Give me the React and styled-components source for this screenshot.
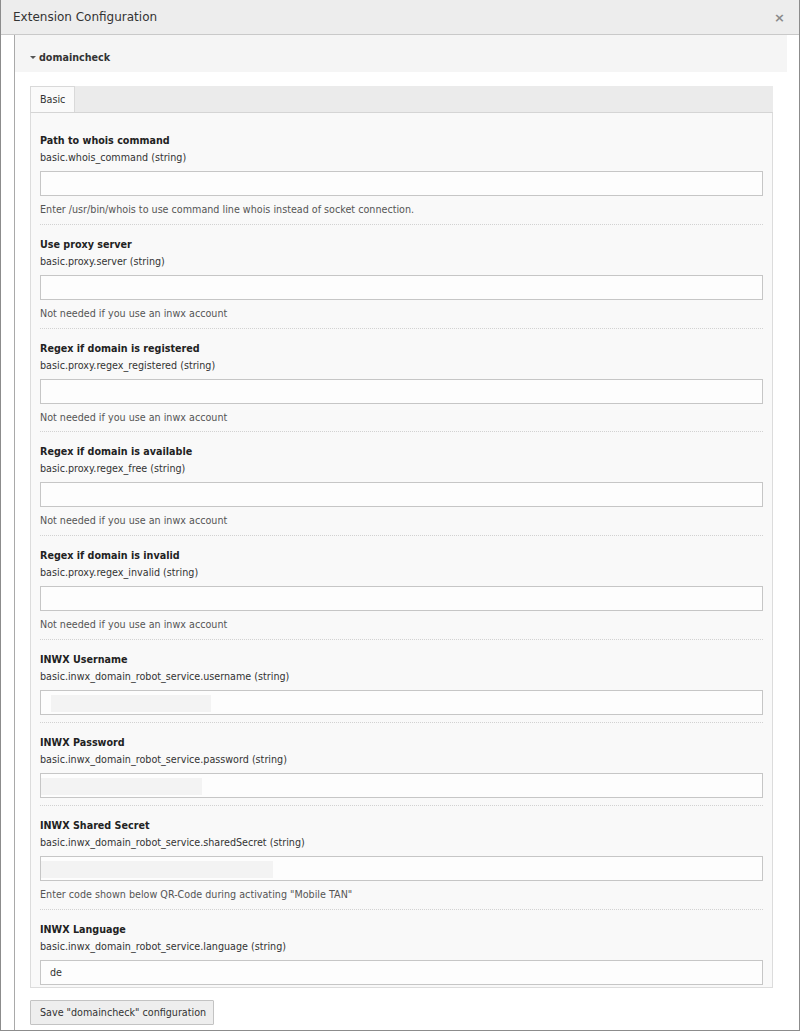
import styled, { createGlobalStyle } from 'styled-components';

const GlobalStyle = createGlobalStyle`
  * { box-sizing: border-box; }
  body {
    margin: 0;
    background: #fff;
    font-family: "DejaVu Sans", Verdana, sans-serif;
    color: #333;
  }
`;

const fields = [
  {
    title: 'Path to whois command',
    code: 'basic.whois_command (string)',
    help: 'Enter /usr/bin/whois to use command line whois instead of socket connection.',
  },
  {
    title: 'Use proxy server',
    code: 'basic.proxy.server (string)',
    help: 'Not needed if you use an inwx account',
  },
  {
    title: 'Regex if domain is registered',
    code: 'basic.proxy.regex_registered (string)',
    help: 'Not needed if you use an inwx account',
  },
  {
    title: 'Regex if domain is available',
    code: 'basic.proxy.regex_free (string)',
    help: 'Not needed if you use an inwx account',
  },
  {
    title: 'Regex if domain is invalid',
    code: 'basic.proxy.regex_invalid (string)',
    help: 'Not needed if you use an inwx account',
  },
  {
    title: 'INWX Username',
    code: 'basic.inwx_domain_robot_service.username (string)',
    mask: [10, 160],
  },
  {
    title: 'INWX Password',
    code: 'basic.inwx_domain_robot_service.password (string)',
    mask: [0, 161],
  },
  {
    title: 'INWX Shared Secret',
    code: 'basic.inwx_domain_robot_service.sharedSecret (string)',
    help: 'Enter code shown below QR-Code during activating "Mobile TAN"',
    mask: [0, 232],
  },
  {
    title: 'INWX Language',
    code: 'basic.inwx_domain_robot_service.language (string)',
    value: 'de',
  },
];

const Modal = styled.div`
  width: 800px;
  height: 1031px;
  border: 1px solid #8c8c8c;
  border-top: none;
  display: flex;
  flex-direction: column;
  overflow: hidden;
  background: #fff;
`;

const Header = styled.div`
  height: 35px;
  flex: none;
  display: flex;
  align-items: center;
  justify-content: space-between;
  padding: 0 14px 0 12px;
  background: #ededed;
  border-bottom: 1px solid #c9c9c9;
`;

const Title = styled.h1`
  margin: 0;
  font-size: 12px;
  font-weight: normal;
  color: #333;
`;

const Close = styled.span`
  font-size: 13px;
  font-weight: bold;
  color: #8a8a8a;
  line-height: 1;
`;

const Body = styled.div`
  flex: 1;
  padding-left: 13px;
  padding-right: 12px;
  display: flex;
  min-height: 0;
`;

const Scroller = styled.div`
  flex: 1;
  border-left: 1px solid #a9a9a9;
  overflow: hidden;
`;

const PanelHeading = styled.div`
  height: 37px;
  display: flex;
  align-items: center;
  gap: 3px;
  padding: 7px 0 0 15px;
  background: #f5f5f5;
  font-size: 9.6px;
  font-weight: bold;
  color: #333;
`;

const Caret = styled.span`
  width: 0;
  height: 0;
  border-left: 3px solid transparent;
  border-right: 3px solid transparent;
  border-top: 3px solid #555;
`;

const PanelBody = styled.div`
  padding: 14px 14px 0 15px;
`;

const TabBar = styled.div`
  display: flex;
  height: 26px;
  background: #ebebeb;
`;

const Tab = styled.div`
  padding: 0 9px;
  display: flex;
  align-items: center;
  background: #fafafa;
  border: 1px solid #d9d9d9;
  border-bottom: none;
  font-size: 9.6px;
  color: #333;
`;

const TabContent = styled.div`
  background: #f9f9f9;
  border: 1px solid #dcdcdc;
  border-top: 1px solid #d5d5d5;
  padding: 8px 9px 2px;
`;

const Field = styled.div`
  padding: 11px 0 ${(p) => (p.$last ? '0' : '7px')};
  border-bottom: ${(p) => (p.$last ? 'none' : '1px dotted #d2d2d2')};
  font-size: 9.6px;
`;

const FieldTitle = styled.div`
  font-weight: bold;
  line-height: 17px;
  color: #222;
`;

const Code = styled.div`
  line-height: 17px;
  color: #333;
`;

const Input = styled.input`
  display: block;
  width: 100%;
  height: 25px;
  margin-top: 5px;
  padding: 0 9px;
  border: 1px solid #c6c6c6;
  background-color: #fdfdfd;
  background-image: ${(p) =>
    p.$mask ? 'linear-gradient(#f3f3f3, #f3f3f3)' : 'none'};
  background-repeat: no-repeat;
  background-size: ${(p) => (p.$mask ? `${p.$mask[1]}px 17px` : 'auto')};
  background-position: ${(p) => (p.$mask ? `${p.$mask[0]}px 4px` : '0 0')};
  font-family: "DejaVu Sans", Verdana, sans-serif;
  font-size: 9.6px;
  color: #333;
  outline: none;
`;

const Help = styled.div`
  margin-top: 7px;
  line-height: 13.75px;
  color: #555;
`;

const Footer = styled.div`
  padding: 12px 0 0;
`;

const SaveButton = styled.button`
  height: 25px;
  width: 184px;
  padding: 0 9px;
  text-align: left;
  border: 1px solid #c3c3c3;
  border-radius: 1px;
  background: #eeeeee;
  font-family: "DejaVu Sans", Verdana, sans-serif;
  font-size: 9.6px;
  color: #333;
  white-space: nowrap;
`;

export default function App() {
  return (
    <>
      <GlobalStyle />
      <Modal>
        <Header>
          <Title>Extension Configuration</Title>
          <Close>×</Close>
        </Header>
        <Body>
          <Scroller>
            <PanelHeading>
              <Caret />
              domaincheck
            </PanelHeading>
            <PanelBody>
              <TabBar>
                <Tab>Basic</Tab>
              </TabBar>
              <TabContent>
                {fields.map((f, i) => (
                  <Field key={f.code} $last={i === fields.length - 1}>
                    <FieldTitle>{f.title}</FieldTitle>
                    <Code>{f.code}</Code>
                    <Input type="text" defaultValue={f.value || ''} $mask={f.mask} />
                    {f.help && <Help>{f.help}</Help>}
                  </Field>
                ))}
              </TabContent>
              <Footer>
                <SaveButton type="button">Save "domaincheck" configuration</SaveButton>
              </Footer>
            </PanelBody>
          </Scroller>
        </Body>
      </Modal>
    </>
  );
}
